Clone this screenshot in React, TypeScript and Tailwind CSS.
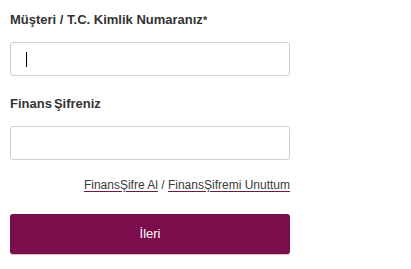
import React from 'react'

const font = { fontFamily: '"Liberation Sans", Arial, sans-serif' }

const App = () => {
    return (
        <div className="w-[411px] h-[269px] bg-white text-[#333]" style={font}>
            <form className="flex flex-col w-[280px] ml-[10px] pt-[12px]">
                {/* Müşteri no */}
                <label className="text-[13px] leading-[16px] font-bold text-[#333]">
                    Müşteri / T.C. Kimlik Numaranız<span className="text-[11px]">*</span>
                </label>
                <div className="mt-[14px] h-[34px] border border-[#cfcfcf] rounded-[3px] bg-white flex items-center pl-[15px]">
                    <span className="block w-[1px] h-[15px] bg-black"></span>
                </div>

                {/* Şifre */}
                <label className="mt-[20px] text-[13px] leading-[16px] font-bold text-[#333]">
                    Finans<span className="ml-[2px]">Şifreniz</span>
                </label>
                <div className="mt-[14px] h-[34px] border border-[#cfcfcf] rounded-[3px] bg-white"></div>

                <div className="mt-[17px] text-right text-[12px] leading-[16px] text-[#3b3b3b]">
                    <a href="#" className="underline decoration-[#6b1d48] underline-offset-2">FinansŞifre Al</a>
                    {' / '}
                    <a href="#" className="underline decoration-[#6b1d48] underline-offset-2">FinansŞifremi Unuttum</a>
                </div>

                <button
                    type="button"
                    className="mt-[21px] h-[40px] rounded-[3px] bg-[#7b0d4d] text-white text-[13px] leading-[16px] shadow-[0_1px_1px_rgba(0,0,0,0.25)]"
                >
                    İleri
                </button>
            </form>
        </div>
    )
}

export default App
